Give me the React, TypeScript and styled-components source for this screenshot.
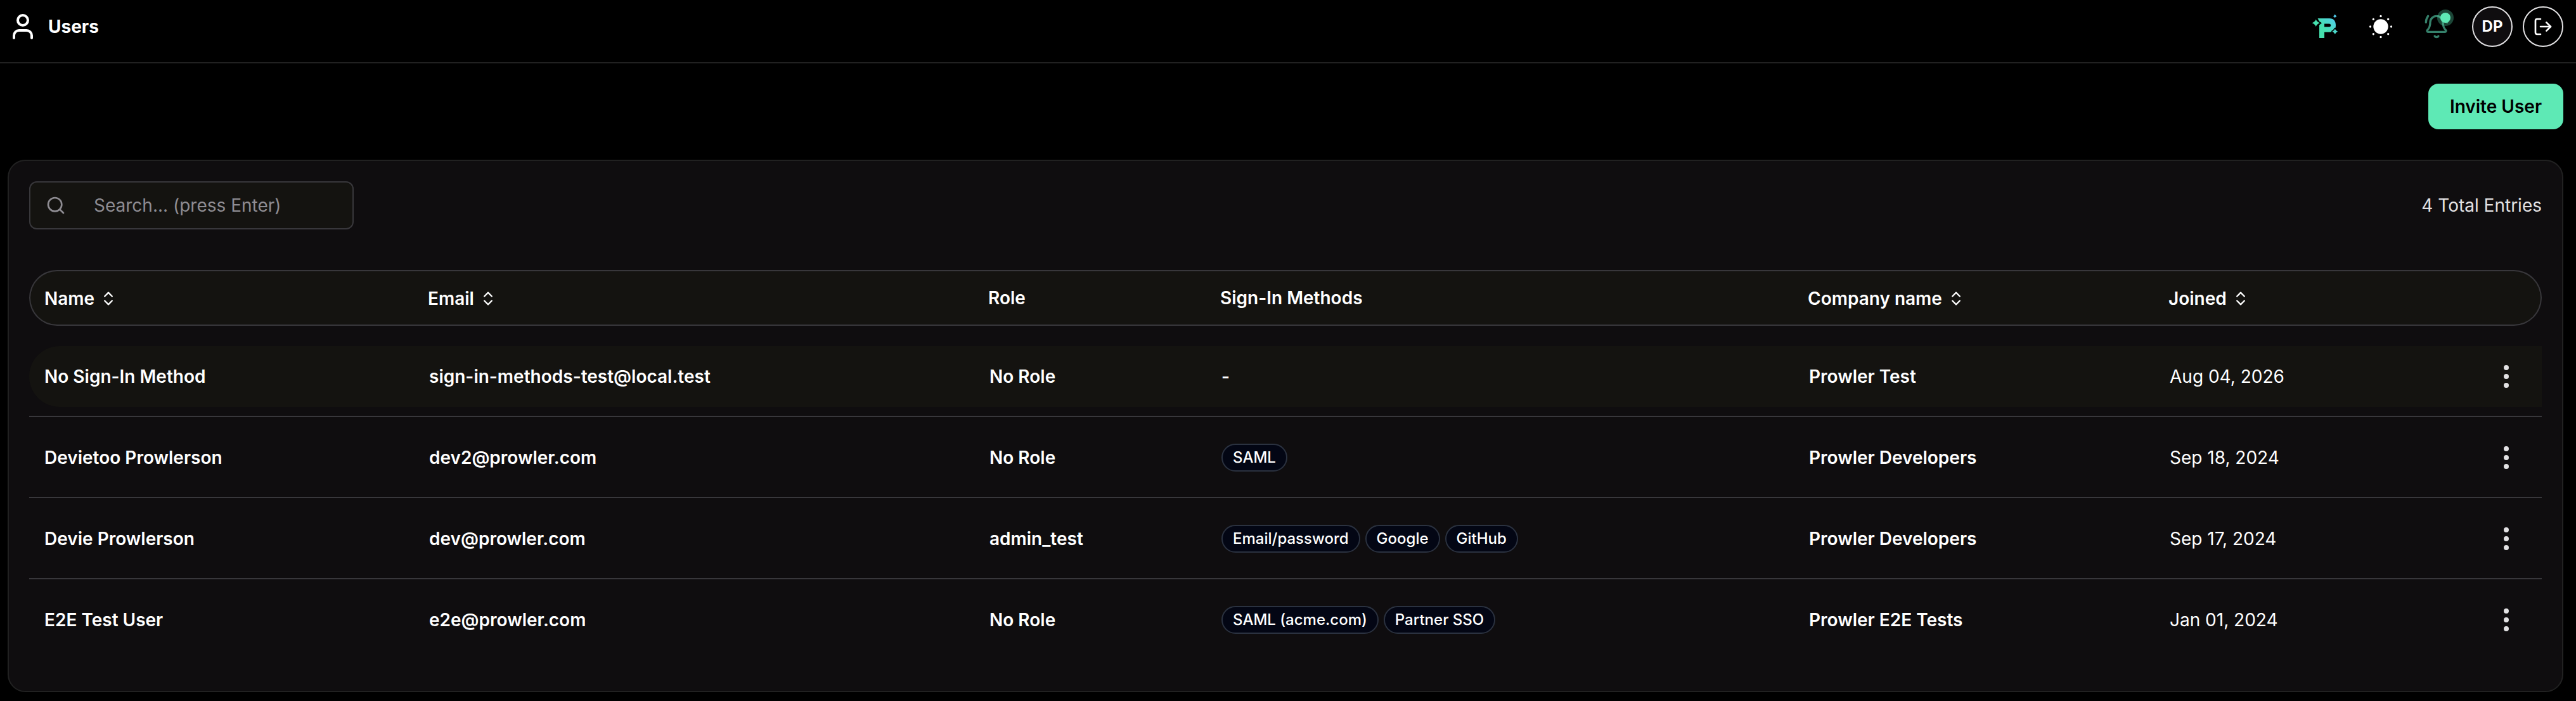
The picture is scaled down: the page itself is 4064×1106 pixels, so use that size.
import React from "react";
import styled, { createGlobalStyle, css } from "styled-components";
import {
  BellRing,
  ChevronsUpDown,
  EllipsisVertical,
  LogOut,
  Search,
  User,
} from "lucide-react";

const color = {
  page: "#000000",
  card: "#0f0d0f",
  raised: "#141310",
  edge: "#212121",
  line: "#38373b",
  text: "#ffffff",
  soft: "#e2e1e3",
  muted: "#8e8c92",
  accent: "#5ee9b5",
  chip: "#030614",
  chipEdge: "#2b3240",
};

const GlobalStyle = createGlobalStyle`
  *, *::before, *::after { box-sizing: border-box; }
  body {
    margin: 0;
    background: ${color.page};
    color: ${color.text};
    font-family: Inter, "Liberation Sans", sans-serif;
    font-size: 28px;
    line-height: 40px;
    -webkit-font-smoothing: antialiased;
  }
  button, input { font: inherit; color: inherit; }
`;

const TopBar = styled.header`
  display: flex;
  align-items: center;
  justify-content: space-between;
  padding: 10px 20px 24px 12px;
  border-bottom: 2px solid ${color.edge};
`;

const PageTitle = styled.div`
  display: flex;
  align-items: center;
  gap: 16px;
`;

const Heading = styled.h1`
  margin: 0;
  font-size: 28px;
  line-height: 40px;
  font-weight: 700;
`;

const Actions = styled.nav`
  display: flex;
  align-items: center;
  gap: 16px;
`;

const ToolGroup = styled.div`
  display: flex;
  align-items: center;
  gap: 24px;
`;

const RoundButton = styled.button<{ $outlined?: boolean; $filled?: boolean }>`
  display: grid;
  place-items: center;
  position: relative;
  width: 64px;
  height: 64px;
  padding: 0;
  border: 2px solid ${(p) => (p.$outlined ? color.soft : "transparent")};
  border-radius: 50%;
  background: ${(p) => (p.$filled ? color.card : "transparent")};
  font-size: 24px;
  line-height: 32px;
  font-weight: 700;
  cursor: pointer;
`;

const BellIcon = styled(BellRing)`
  color: #35806a;
`;

const UnreadDot = styled.span`
  position: absolute;
  top: 8px;
  right: 8px;
  width: 16px;
  height: 16px;
  border-radius: 50%;
  background: ${color.accent};
  box-shadow: 0 0 0 5px rgba(94, 233, 181, 0.3);
`;

const Main = styled.main`
  padding: 32px 20px 14px 12px;
`;

const PageActions = styled.div`
  display: flex;
  justify-content: flex-end;
  margin-bottom: 48px;
`;

const PrimaryButton = styled.button`
  padding: 14px 32px;
  border: 2px solid ${color.accent};
  border-radius: 16px;
  background: ${color.accent};
  color: #000000;
  font-weight: 600;
  cursor: pointer;
`;

const Card = styled.section`
  padding: 32px 32px 48px;
  border: 2px solid ${color.edge};
  border-radius: 28px;
  background: ${color.card};
`;

const Toolbar = styled.div`
  display: flex;
  align-items: center;
  justify-content: space-between;
  margin-bottom: 64px;
`;

const SearchBox = styled.label`
  display: flex;
  align-items: center;
  gap: 44px;
  width: 512px;
  height: 76px;
  padding: 0 24px;
  border: 2px solid ${color.line};
  border-radius: 12px;
  background: ${color.raised};
  color: ${color.muted};
`;

const SearchInput = styled.input`
  flex: 1;
  min-width: 0;
  padding: 0;
  border: 0;
  outline: 0;
  background: transparent;
  color: ${color.text};

  &::placeholder {
    color: ${color.muted};
    opacity: 1;
  }
`;

const Total = styled.span`
  color: ${color.soft};
`;

const Table = styled.table`
  width: 100%;
  table-layout: fixed;
  border-collapse: separate;
  border-spacing: 0;
  text-align: left;

  tbody::before {
    content: "";
    display: block;
    height: 16px;
  }
`;

const Column = styled.col<{ $share: number }>`
  width: ${(p) => (p.$share / 3964) * 100}%;
`;

const HeadCell = styled.th`
  height: 88px;
  padding: 0 22px;
  border: solid ${color.line};
  border-width: 2px 0;
  background: ${color.raised};
  font-weight: 600;

  &:first-child {
    border-left-width: 2px;
    border-radius: 44px 0 0 44px;
  }

  &:last-child {
    border-right-width: 2px;
    border-radius: 0 44px 44px 0;
  }
`;

const SortButton = styled.button`
  display: inline-flex;
  align-items: center;
  gap: 8px;
  padding: 0;
  border: 0;
  background: none;
  vertical-align: middle;
  cursor: pointer;
`;

const CellBody = styled.div<{ $end?: boolean }>`
  display: flex;
  align-items: center;
  justify-content: ${(p) => (p.$end ? "flex-end" : "flex-start")};
  gap: 8px;
  height: 96px;
  padding: 0 24px;
`;

const Cell = styled.td<{ $regular?: boolean }>`
  padding: 16px 0 14px;
  border-bottom: 2px solid ${color.line};
  font-weight: ${(p) => (p.$regular ? 400 : 600)};
`;

const rowHighlight = css`
  ${CellBody} {
    background: ${color.raised};
  }
`;

const Row = styled.tr<{ $active?: boolean }>`
  ${(p) => p.$active && rowHighlight}

  &:hover {
    ${rowHighlight}
  }

  ${Cell}:first-child ${CellBody} {
    border-radius: 48px 0 0 48px;
  }

  &:last-child ${Cell} {
    border-bottom-color: transparent;
  }
`;

const Chip = styled.span`
  padding: 4px 16px;
  border: 2px solid ${color.chipEdge};
  border-radius: 22px;
  background: ${color.chip};
  font-size: 24px;
  line-height: 32px;
  font-weight: 500;
  white-space: nowrap;
`;

const MenuButton = styled.button`
  display: grid;
  place-items: center;
  width: 64px;
  height: 64px;
  padding: 0;
  border: 0;
  border-radius: 50%;
  background: none;
  color: ${color.soft};
  cursor: pointer;
`;

const Mark = styled.svg`
  overflow: visible;
`;

function ProwlerMark() {
  return (
    <Mark width="40" height="40" viewBox="0 0 40 40" aria-hidden="true">
      <defs>
        <linearGradient id="mark" gradientUnits="userSpaceOnUse" x1="10" y1="32" x2="38" y2="8">
          <stop offset="0.3" stopColor="#45e0ae" />
          <stop offset="1" stopColor="#52cdee" />
        </linearGradient>
      </defs>
      <g fill="url(#mark)">
        <path
          fillRule="evenodd"
          d="M8.500 7H27c6.500 0 10 4 10 10.800S33.500 28.700 27 28.700h-8V38h-8V17.500l4-3.200-4-2.500zM19 15.500v5h7.500c1.800 0 2.700-1 2.700-2.500s-.9-2.500-2.700-2.500z"
        />
        <g stroke="#000" strokeWidth="3" strokeLinejoin="round" paintOrder="stroke">
          <path d="M5.700 8.600Q7.400 12.700 11.800 14.300 7.400 15.900 5.700 20 4 15.900-.4 14.300 4 12.700 5.700 8.600z" />
          <path d="M35.800 23.400Q37 26.500 40.100 27.700 37 28.900 35.800 32 34.600 28.900 31.500 27.700 34.600 26.500 35.800 23.400z" />
        </g>
        <path d="M35.700.5Q36.500 2.600 38.600 3.400 36.500 4.200 35.700 6.300 34.900 4.200 32.800 3.400 34.900 2.600 35.700.5z" />
      </g>
    </Mark>
  );
}

function SunMark() {
  const rays = [0, 45, 90, 135, 180, 225, 270, 315];
  return (
    <svg width="40" height="40" viewBox="0 0 24 24" fill="#fff" aria-hidden="true">
      <circle cx="12" cy="12" r="7" />
      {rays.map((angle) => (
        <circle key={angle} cx="12" cy="2.100" r="1" transform={`rotate(${angle} 12 12)`} />
      ))}
    </svg>
  );
}

const columns = [
  { label: "Name", share: 607, sortable: true },
  { label: "Email", share: 884, sortable: true },
  { label: "Role", share: 366 },
  { label: "Sign-In Methods", share: 927 },
  { label: "Company name", share: 569, sortable: true },
  { label: "Joined", share: 411, sortable: true },
  { label: "", share: 200 },
];

const users = [
  {
    name: "No Sign-In Method",
    email: "sign-in-methods-test@local.test",
    role: "No Role",
    methods: [],
    company: "Prowler Test",
    joined: "Aug 04, 2026",
    active: true,
  },
  {
    name: "Devietoo Prowlerson",
    email: "dev2@prowler.com",
    role: "No Role",
    methods: ["SAML"],
    company: "Prowler Developers",
    joined: "Sep 18, 2024",
  },
  {
    name: "Devie Prowlerson",
    email: "dev@prowler.com",
    role: "admin_test",
    methods: ["Email/password", "Google", "GitHub"],
    company: "Prowler Developers",
    joined: "Sep 17, 2024",
  },
  {
    name: "E2E Test User",
    email: "e2e@prowler.com",
    role: "No Role",
    methods: ["SAML (acme.com)", "Partner SSO"],
    company: "Prowler E2E Tests",
    joined: "Jan 01, 2024",
  },
];

export default function App() {
  return (
    <>
      <GlobalStyle />
      <TopBar>
        <PageTitle>
          <User size={48} aria-hidden="true" />
          <Heading>Users</Heading>
        </PageTitle>
        <Actions>
          <ToolGroup>
            <RoundButton aria-label="Prowler">
              <ProwlerMark />
            </RoundButton>
            <RoundButton aria-label="Switch theme">
              <SunMark />
            </RoundButton>
            <RoundButton aria-label="Notifications">
              <BellIcon size={40} />
              <UnreadDot />
            </RoundButton>
            <RoundButton $outlined $filled aria-label="Account DP">
              DP
            </RoundButton>
          </ToolGroup>
          <RoundButton $outlined aria-label="Sign out">
            <LogOut size={32} />
          </RoundButton>
        </Actions>
      </TopBar>
      <Main>
        <PageActions>
          <PrimaryButton>Invite User</PrimaryButton>
        </PageActions>
        <Card>
          <Toolbar>
            <SearchBox>
              <Search size={32} aria-hidden="true" />
              <SearchInput type="text" aria-label="Search" placeholder="Search... (press Enter)" />
            </SearchBox>
            <Total>4 Total Entries</Total>
          </Toolbar>
          <Table>
            <colgroup>
              {columns.map((column) => (
                <Column key={column.label} $share={column.share} />
              ))}
            </colgroup>
            <thead>
              <tr>
                {columns.map((column) => (
                  <HeadCell key={column.label} scope="col">
                    {column.sortable ? (
                      <SortButton>
                        {column.label}
                        <ChevronsUpDown size={28} aria-hidden="true" />
                      </SortButton>
                    ) : (
                      column.label
                    )}
                  </HeadCell>
                ))}
              </tr>
            </thead>
            <tbody>
              {users.map((user) => (
                <Row key={user.email} $active={user.active}>
                  <Cell>
                    <CellBody>{user.name}</CellBody>
                  </Cell>
                  <Cell>
                    <CellBody>{user.email}</CellBody>
                  </Cell>
                  <Cell>
                    <CellBody>{user.role}</CellBody>
                  </Cell>
                  <Cell>
                    <CellBody>
                      {user.methods.length === 0
                        ? "-"
                        : user.methods.map((method) => <Chip key={method}>{method}</Chip>)}
                    </CellBody>
                  </Cell>
                  <Cell>
                    <CellBody>{user.company}</CellBody>
                  </Cell>
                  <Cell $regular>
                    <CellBody>{user.joined}</CellBody>
                  </Cell>
                  <Cell>
                    <CellBody $end>
                      <MenuButton aria-label={`Actions for ${user.name}`}>
                        <EllipsisVertical size={48} />
                      </MenuButton>
                    </CellBody>
                  </Cell>
                </Row>
              ))}
            </tbody>
          </Table>
        </Card>
      </Main>
    </>
  );
}
